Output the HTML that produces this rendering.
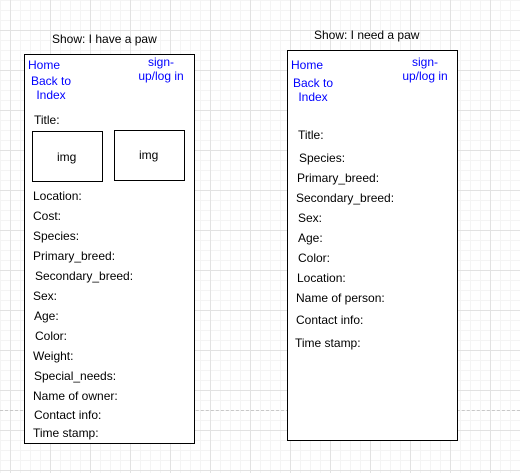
<!DOCTYPE html>
<html><head><style>
body{margin:0;width:520px;height:473px;overflow:hidden;position:relative;font-family:"Liberation Sans",sans-serif;font-size:12px;color:#000;
background-color:#fff;
background-image:linear-gradient(#e2e2e2 1px,transparent 1px),linear-gradient(90deg,#e2e2e2 1px,transparent 1px),linear-gradient(#f4f4f4 1px,transparent 1px),linear-gradient(90deg,#f4f4f4 1px,transparent 1px);
background-size:40px 40px,40px 40px,10px 10px,10px 10px;
background-position:0 30px,10px 0,0 0,0 0;}
.t{position:absolute;white-space:nowrap;line-height:14px}
.b{color:#0000ff;text-align:center}
.box{position:absolute;background:#fff;border:1px solid #000;box-sizing:border-box}
.dash{position:absolute;left:0;top:410px;width:520px;border-top:1px dashed #c8c8c8}
</style></head><body>
<div class="dash"></div>
<div class="t" style="left:52px;top:32px">Show: I have a paw</div>
<div class="box" style="left:24px;top:54px;width:171px;height:390px"></div>
<div class="t b" style="left:28px;top:58px">Home</div>
<div class="t b" style="left:28px;top:74px;width:46px">Back to<br>Index</div>
<div class="t b" style="left:136px;top:55px;width:50px">sign-<br>up/log in</div>
<div class="t" style="left:34px;top:113px">Title:</div>
<div class="box" style="left:32px;top:131px;width:71px;height:51px"></div>
<div class="t" style="left:57px;top:150px">img</div>
<div class="box" style="left:114px;top:130px;width:71px;height:51px"></div>
<div class="t" style="left:139px;top:148px">img</div>
<div class="t" style="left:33px;top:189px">Location:</div>
<div class="t" style="left:33px;top:209px">Cost:</div>
<div class="t" style="left:33px;top:229px">Species:</div>
<div class="t" style="left:33px;top:249px">Primary_breed:</div>
<div class="t" style="left:35px;top:269px">Secondary_breed:</div>
<div class="t" style="left:33px;top:289px">Sex:</div>
<div class="t" style="left:34px;top:309px">Age:</div>
<div class="t" style="left:35px;top:329px">Color:</div>
<div class="t" style="left:33px;top:349px">Weight:</div>
<div class="t" style="left:34px;top:369px">Special_needs:</div>
<div class="t" style="left:33px;top:389px">Name of owner:</div>
<div class="t" style="left:34px;top:408px">Contact info:</div>
<div class="t" style="left:33px;top:426px">Time stamp:</div>

<div class="t" style="left:314px;top:28px">Show: I need a paw</div>
<div class="box" style="left:287px;top:50px;width:171px;height:391px"></div>
<div class="t b" style="left:291px;top:58px">Home</div>
<div class="t b" style="left:290px;top:76px;width:46px">Back to<br>Index</div>
<div class="t b" style="left:400px;top:55px;width:50px">sign-<br>up/log in</div>
<div class="t" style="left:298px;top:128px">Title:</div>
<div class="t" style="left:299px;top:151px">Species:</div>
<div class="t" style="left:297px;top:171px">Primary_breed:</div>
<div class="t" style="left:296px;top:191px">Secondary_breed:</div>
<div class="t" style="left:298px;top:211px">Sex:</div>
<div class="t" style="left:298px;top:231px">Age:</div>
<div class="t" style="left:298px;top:251px">Color:</div>
<div class="t" style="left:297px;top:271px">Location:</div>
<div class="t" style="left:296px;top:291px">Name of person:</div>
<div class="t" style="left:296px;top:313px">Contact info:</div>
<div class="t" style="left:295px;top:336px">Time stamp:</div>
</body></html>
